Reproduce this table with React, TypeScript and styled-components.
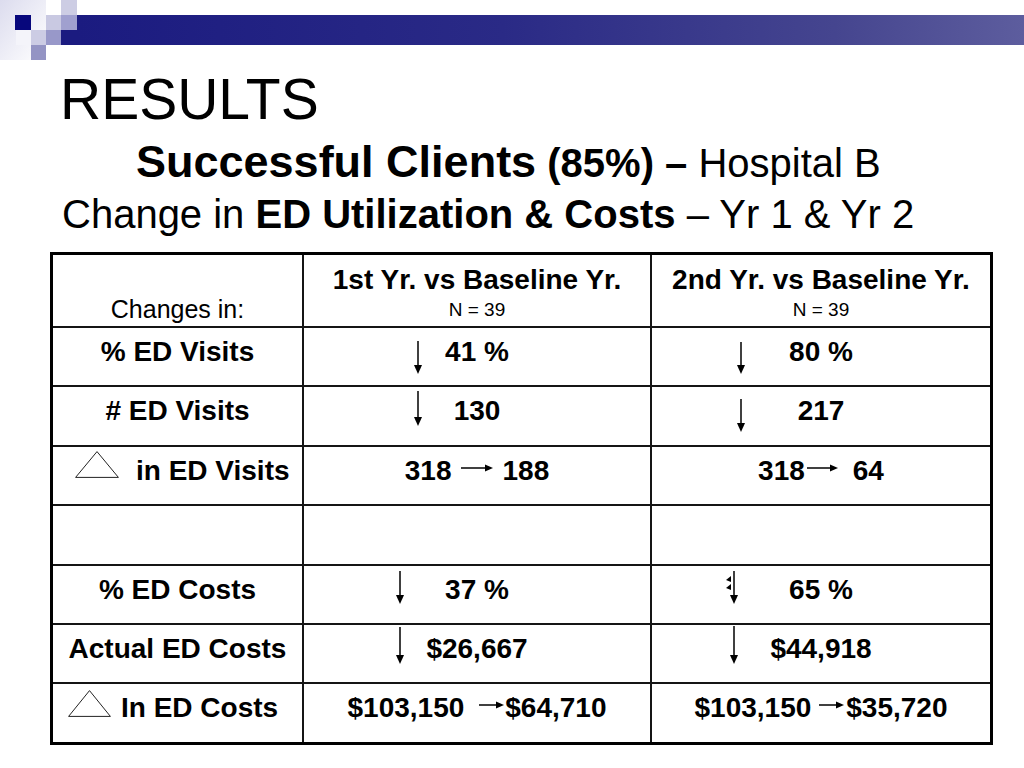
import React from 'react';
import styled, { createGlobalStyle } from 'styled-components';

const GlobalStyle = createGlobalStyle`
  html, body { margin: 0; padding: 0; background: #ffffff; }
  #root { width: 1024px; height: 768px; }
`;

const Slide = styled.div`
  width: 1024px;
  height: 768px;
  overflow: hidden;
  background: #ffffff;
  color: #000000;
  font-family: "Liberation Sans", Arial, Helvetica, sans-serif;
`;

const Band = styled.header`
  display: flex;
  height: 60px;
`;

const Bar = styled.div`
  flex: 1;
  height: 30px;
  margin-top: 15px;
  background: linear-gradient(90deg, #1b1b80 0%, #2a2a86 45%, #45458f 80%, #5d5d9e 100%);
`;

const Heading = styled.h1`
  margin: 11px 0 0 60px;
  font-size: 57px;
  line-height: 57px;
  font-weight: 400;
`;

const SubLine = styled.div<{ $indent: number; $gap: number; $size: number }>`
  margin: ${(p) => p.$gap}px 0 0 ${(p) => p.$indent}px;
  font-size: ${(p) => p.$size}px;
  line-height: ${(p) => p.$size}px;
  white-space: nowrap;
`;

const Strong = styled.b<{ $size: number }>`
  font-size: ${(p) => p.$size}px;
  font-weight: 700;
`;

const Plain = styled.span<{ $size: number }>`
  font-size: ${(p) => p.$size}px;
  font-weight: 400;
`;

const Table = styled.div`
  margin: 18px 0 0 50px;
  width: 943px;
  box-sizing: border-box;
  border: 3px solid #000;
  display: grid;
  grid-template-columns: 251px 348px 338px;
  grid-template-rows: 73px 59px 60px 59px 60px 59px 59px 58px;
`;

const Cell = styled.div<{ $lastCol?: boolean; $lastRow?: boolean }>`
  position: relative;
  box-sizing: border-box;
  border-right: ${(p) => (p.$lastCol ? 'none' : '2px solid #151515')};
  border-bottom: ${(p) => (p.$lastRow ? 'none' : '2px solid #151515')};
  padding-top: 8px;
  text-align: center;
  font-size: 28px;
  line-height: 32px;
  font-weight: 700;
  white-space: nowrap;
`;

const HeadCell = styled(Cell)`
  display: flex;
  flex-direction: column;
  align-items: center;
  padding-top: 10px;
`;

const CornerCell = styled(Cell)`
  display: flex;
  flex-direction: column;
  justify-content: flex-end;
  align-items: center;
  padding: 0 0 2px 0;
  font-size: 25px;
  line-height: 29px;
  font-weight: 400;
`;

const HeadTitle = styled.div`
  font-size: 28px;
  line-height: 30px;
  font-weight: 700;
`;

const HeadCount = styled.div`
  font-size: 19px;
  line-height: 30px;
  font-weight: 400;
`;

const LabelCell = styled(Cell)<{ $pad: number; $gap: number }>`
  display: flex;
  align-items: flex-start;
  padding-left: ${(p) => p.$pad}px;
  gap: ${(p) => p.$gap}px;
  text-align: left;
`;

const Delta = styled.svg<{ $shift: number }>`
  flex: none;
  margin-top: ${(p) => p.$shift}px;
`;

const DownSvg = styled.svg<{ $left: number; $top: number }>`
  position: absolute;
  left: ${(p) => p.$left}px;
  top: ${(p) => p.$top}px;
`;

const RightSvg = styled.svg<{ $before: number; $after: number }>`
  display: inline-block;
  vertical-align: 7px;
  margin-left: ${(p) => p.$before}px;
  margin-right: ${(p) => p.$after}px;
`;

const Mark = styled.svg<{ $left: number; $top: number }>`
  position: absolute;
  left: ${(p) => p.$left}px;
  top: ${(p) => p.$top}px;
`;

type Down = { x: number; y: number; len: number };

const DownArrow: React.FC<Down> = ({ x, y, len }) => (
  <DownSvg $left={x - 6} $top={y} width={12} height={len} viewBox={`0 0 12 ${len}`}>
    <line x1={6} y1={0} x2={6} y2={len - 8} stroke="#000" strokeWidth={1.5} />
    <polygon points={`2,${len - 9} 10,${len - 9} 6,${len}`} fill="#000" />
  </DownSvg>
);

const RightArrow: React.FC<{ w: number; before: number; after: number }> = ({ w, before, after }) => (
  <RightSvg $before={before} $after={after} width={w} height={10} viewBox={`0 0 ${w} 10`}>
    <line x1={0} y1={5} x2={w - 6} y2={5} stroke="#000" strokeWidth={1.5} />
    <polygon points={`${w - 8},1.5 ${w},5 ${w - 8},8.5`} fill="#000" />
  </RightSvg>
);

const Triangle: React.FC<{ shift: number; w: number; h: number }> = ({ shift, w, h }) => (
  <Delta $shift={shift} width={w} height={h} viewBox={`0 0 ${w} ${h}`}>
    <polygon points={`0.6,${h - 0.6} ${w / 2},0.6 ${w - 0.6},${h - 0.6}`} fill="none" stroke="#222" strokeWidth={1} />
  </Delta>
);

const Logo: React.FC = () => (
  <svg width={77} height={60} viewBox="0 0 77 60">
    <defs>
      <linearGradient id="fade" x1="0" y1="0" x2="1" y2="1">
        <stop offset="0" stopColor="#dcdcee" />
        <stop offset="1" stopColor="#ffffff" />
      </linearGradient>
    </defs>
    <rect x={0} y={0} width={46} height={60} fill="url(#fade)" />
    <rect x={16} y={30} width={15} height={15} fill="#f4f4fa" />
    <rect x={61} y={0} width={16} height={15} fill="#cdcde4" />
    <rect x={15} y={15} width={16} height={15} fill="#07077c" />
    <rect x={46} y={15} width={15} height={15} fill="#c9c9e2" />
    <rect x={61} y={30} width={16} height={15} fill="#1b1b80" />
    <rect x={61} y={15} width={16} height={15} fill="#a0a0cf" />
    <rect x={31} y={30} width={15} height={15} fill="#ccccE4" />
    <rect x={46} y={30} width={15} height={15} fill="#9898c9" />
    <rect x={31} y={45} width={15} height={15} fill="#9494c4" />
  </svg>
);

export default function App() {
  return (
    <Slide>
      <GlobalStyle />
      <Band>
        <Logo />
        <Bar />
      </Band>

      <Heading>RESULTS</Heading>
      <SubLine $indent={136} $gap={11} $size={45}>
        <Strong $size={45}>Successful Clients</Strong>
        <Strong $size={40}> (85%) –</Strong>
        <Plain $size={40}> Hospital B</Plain>
      </SubLine>
      <SubLine $indent={62} $gap={8} $size={40}>
        <Plain $size={40}>Change in </Plain>
        <Strong $size={40}>ED Utilization &amp; Costs</Strong>
        <Plain $size={40}> – Yr 1 &amp; Yr 2</Plain>
      </SubLine>

      <Table>
        <CornerCell>Changes in:</CornerCell>
        <HeadCell>
          <HeadTitle>1st Yr. vs Baseline Yr.</HeadTitle>
          <HeadCount>N = 39</HeadCount>
        </HeadCell>
        <HeadCell $lastCol>
          <HeadTitle>2nd Yr. vs Baseline Yr.</HeadTitle>
          <HeadCount>N = 39</HeadCount>
        </HeadCell>

        <Cell>% ED Visits</Cell>
        <Cell>
          <DownArrow x={114} y={13} len={33} />
          41 %
        </Cell>
        <Cell $lastCol>
          <DownArrow x={89} y={14} len={32} />
          80 %
        </Cell>

        <Cell># ED Visits</Cell>
        <Cell>
          <DownArrow x={114} y={4} len={35} />
          130
        </Cell>
        <Cell $lastCol>
          <DownArrow x={89} y={12} len={33} />
          217
        </Cell>

        <LabelCell $pad={22} $gap={17}>
          <Triangle shift={-4} w={44} h={27} />
          <span>in ED Visits</span>
        </LabelCell>
        <Cell>
          318
          <RightArrow w={32} before={9} after={10} />
          188
        </Cell>
        <Cell $lastCol>
          318
          <RightArrow w={31} before={2} after={15} />
          64
        </Cell>

        <Cell />
        <Cell />
        <Cell $lastCol />

        <Cell>% ED Costs</Cell>
        <Cell>
          <DownArrow x={96} y={5} len={33} />
          37 %
        </Cell>
        <Cell $lastCol>
          <DownArrow x={82} y={5} len={33} />
          <Mark $left={73} $top={10} width={8} height={16} viewBox="0 0 8 16">
            <polygon points="6,0 1,4 6,6" fill="#000" />
            <polygon points="6,8 1,12 6,14" fill="#000" />
          </Mark>
          65 %
        </Cell>

        <Cell>Actual ED Costs</Cell>
        <Cell>
          <DownArrow x={96} y={2} len={37} />
          $26,667
        </Cell>
        <Cell $lastCol>
          <DownArrow x={82} y={1} len={38} />
          $44,918
        </Cell>

        <LabelCell $pad={15} $gap={10} $lastRow>
          <Triangle shift={-2} w={43} h={27} />
          <span>In ED Costs</span>
        </LabelCell>
        <Cell $lastRow>
          $103,150
          <RightArrow w={25} before={15} after={1} />
          $64,710
        </Cell>
        <Cell $lastRow $lastCol>
          $103,150
          <RightArrow w={25} before={8} after={2} />
          $35,720
        </Cell>
      </Table>
    </Slide>
  );
}
